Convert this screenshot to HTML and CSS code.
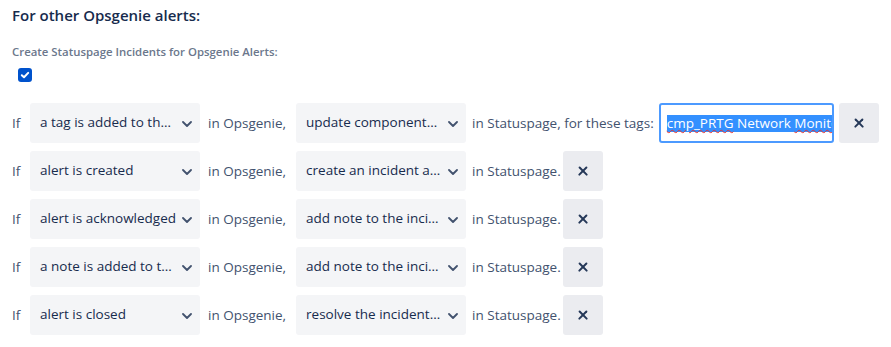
FILE: index.html
```html
<!DOCTYPE html>
<html lang="en">

<head>
    <meta charset="UTF-8">
    <meta name="viewport" content="width=device-width, initial-scale=1.0">
    <title>Opsgenie alerts</title>
    <link rel="stylesheet" href="styles.css">
</head>

<body>
    <div class="section">
        <h3 class="title">For other Opsgenie alerts:</h3>
        <div class="field-label">Create Statuspage Incidents for Opsgenie Alerts:</div>
        <div class="checkbox">
            <svg width="14" height="14" viewBox="0 0 14 14">
                <rect x="0" y="0" width="14" height="14" rx="3" fill="#0052CC" />
                <path d="M3.8 7.2 L6 9.2 L10.2 4.9" fill="none" stroke="#fff" stroke-width="2" stroke-linecap="round" stroke-linejoin="round" />
            </svg>
        </div>

        <div class="rules">
            <div class="rule">
                <span class="word if">If</span>
                <div class="select"><span class="select-value">a tag is added to the alert</span><svg class="chevron" width="10" height="6" viewBox="0 0 10 6"><path d="M1 1 L5 5 L9 1" /></svg></div>
                <span class="word">in Opsgenie,</span>
                <div class="select"><span class="select-value">update components of the incident</span><svg class="chevron" width="10" height="6" viewBox="0 0 10 6"><path d="M1 1 L5 5 L9 1" /></svg></div>
                <span class="word tail">in Statuspage, for these tags:</span>
                <div class="tags-input"><span class="sel"><span class="typo">cmp_PRTG</span> Network <span class="typo">Monitor</span></span></div>
                <button class="remove"></button>
            </div>
            <div class="rule">
                <span class="word if">If</span>
                <div class="select"><span class="select-value">alert is created</span><svg class="chevron" width="10" height="6" viewBox="0 0 10 6"><path d="M1 1 L5 5 L9 1" /></svg></div>
                <span class="word">in Opsgenie,</span>
                <div class="select"><span class="select-value">create an incident and notify</span><svg class="chevron" width="10" height="6" viewBox="0 0 10 6"><path d="M1 1 L5 5 L9 1" /></svg></div>
                <span class="word tail">in Statuspage.</span>
                <button class="remove"></button>
            </div>
            <div class="rule">
                <span class="word if">If</span>
                <div class="select"><span class="select-value">alert is acknowledged</span><svg class="chevron" width="10" height="6" viewBox="0 0 10 6"><path d="M1 1 L5 5 L9 1" /></svg></div>
                <span class="word">in Opsgenie,</span>
                <div class="select"><span class="select-value">add note to the incident</span><svg class="chevron" width="10" height="6" viewBox="0 0 10 6"><path d="M1 1 L5 5 L9 1" /></svg></div>
                <span class="word tail">in Statuspage.</span>
                <button class="remove"></button>
            </div>
            <div class="rule">
                <span class="word if">If</span>
                <div class="select"><span class="select-value">a note is added to the alert</span><svg class="chevron" width="10" height="6" viewBox="0 0 10 6"><path d="M1 1 L5 5 L9 1" /></svg></div>
                <span class="word">in Opsgenie,</span>
                <div class="select"><span class="select-value">add note to the incident</span><svg class="chevron" width="10" height="6" viewBox="0 0 10 6"><path d="M1 1 L5 5 L9 1" /></svg></div>
                <span class="word tail">in Statuspage.</span>
                <button class="remove"></button>
            </div>
            <div class="rule">
                <span class="word if">If</span>
                <div class="select"><span class="select-value">alert is closed</span><svg class="chevron" width="10" height="6" viewBox="0 0 10 6"><path d="M1 1 L5 5 L9 1" /></svg></div>
                <span class="word">in Opsgenie,</span>
                <div class="select"><span class="select-value">resolve the incident and notify</span><svg class="chevron" width="10" height="6" viewBox="0 0 10 6"><path d="M1 1 L5 5 L9 1" /></svg></div>
                <span class="word tail">in Statuspage.</span>
                <button class="remove"></button>
            </div>
        </div>
    </div>
</body>

</html>
```

FILE: styles.css
```css
html,
body {
    margin: 0;
    padding: 0;
    background: #fff;
    color: #172B4D;
    font-family: "Open Sans", "Noto Sans", sans-serif;
}

.section {
    padding: 5px 12px 0 12px;
}

.title {
    margin: 0;
    font-size: 15px;
    line-height: 20px;
    font-weight: 600;
    color: #172B4D;
}

.field-label {
    margin-top: 19px;
    font-size: 11.4px;
    line-height: 16px;
    font-weight: 600;
    color: #6B778C;
}

.checkbox {
    margin: 8px 0 0 6px;
    height: 14px;
}

.checkbox svg {
    display: block;
}

.rules {
    margin-top: 21px;
    display: flex;
    flex-direction: column;
    gap: 8px;
}

.rule {
    display: flex;
    align-items: center;
    height: 40px;
    font-size: 13.5px;
}

.word {
    color: #42526E;
    margin: 0 10px 0 8px;
    white-space: nowrap;
    flex: none;
}

.word.if {
    margin: 0;
    width: 18px;
}

.word.tail {
    margin: 0 2px 0 6px;
}

.select {
    width: 170px;
    height: 40px;
    box-sizing: border-box;
    background: #F4F5F7;
    border-radius: 3px;
    display: flex;
    align-items: center;
    padding: 0 8px 0 10px;
    color: #172B4D;
    flex: none;
}

.select-value {
    flex: 1;
    overflow: hidden;
    white-space: nowrap;
    text-overflow: ellipsis;
    margin-top: -2px;
}

.chevron {
    flex: none;
    margin: 1px 0 0 6px;
}

.chevron path {
    fill: none;
    stroke: #42526E;
    stroke-width: 1.8;
    stroke-linecap: round;
    stroke-linejoin: round;
}

.tags-input {
    width: 175px;
    height: 40px;
    box-sizing: border-box;
    margin-left: 3px;
    border: 2px solid #4C9AFF;
    border-radius: 3px;
    padding: 0 0 0 6px;
    display: flex;
    align-items: center;
    overflow: hidden;
    white-space: nowrap;
    font-size: 13.5px;
    flex: none;
}

.sel {
    background: #3390FF;
    color: #fff;
    line-height: 17px;
}

.typo {
    text-decoration: underline wavy #E5322D;
    text-decoration-thickness: 1px;
    text-underline-offset: 1px;
}

.remove {
    width: 40px;
    height: 40px;
    border: none;
    border-radius: 3px;
    background: #EBECF0;
    margin-left: 0;
    position: relative;
    padding: 0;
    flex: none;
}

.remove::before,
.remove::after {
    content: "";
    position: absolute;
    left: 14px;
    top: 19px;
    width: 12px;
    height: 2.4px;
    background: #253858;
    border-radius: 1px;
}

.remove::before {
    transform: rotate(45deg);
}

.remove::after {
    transform: rotate(-45deg);
}

.tags-input + .remove {
    margin-left: 5px;
}
```
